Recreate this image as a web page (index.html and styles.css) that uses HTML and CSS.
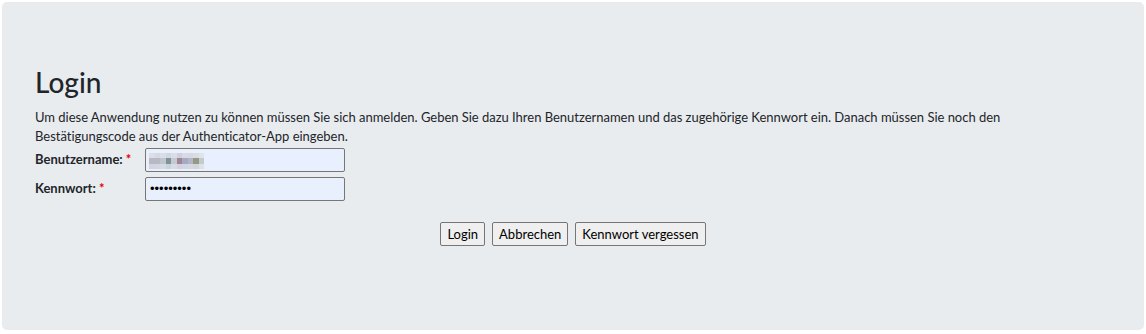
FILE: index.html
```html
<!DOCTYPE html>
<html lang="de">
<head>
  <meta charset="UTF-8" />
  <meta name="viewport" content="width=device-width, initial-scale=1.0"/>
  <title>Login</title>
  <link rel="stylesheet" href="styles.css">
</head>
<body>
  <div class="jumbotron">
    <h3 class="title">Login</h3>
    <p class="intro">Um diese Anwendung nutzen zu können müssen Sie sich anmelden. Geben Sie dazu Ihren Benutzernamen und das zugehörige Kennwort ein. Danach müssen Sie noch den Bestätigungscode aus der Authenticator-App eingeben.</p>

    <form class="login-form" onsubmit="return false">
      <div class="form-row">
        <label for="user" class="form-label">Benutzername: <span class="req">*</span></label>
        <div class="field">
          <input type="text" id="user" class="form-input" value="" />
          <!-- username is blurred in the screenshot -->
          <div class="blur">
            <span style="background:#dcdee6"></span><span style="background:#d6d9e2"></span><span style="background:#d9dde4"></span><span style="background:#d3d6e0"></span><span style="background:#dadde5"></span><span style="background:#d0cfdc"></span><span style="background:#d8dbe4"></span><span style="background:#d6d9e2"></span><span style="background:#d9dce3"></span><span style="background:#e0e3ea"></span>
            <span style="background:#b7b9c6"></span><span style="background:#b5bac4"></span><span style="background:#c0c4cc"></span><span style="background:#7d929b"></span><span style="background:#c5c9d3"></span><span style="background:#a08595"></span><span style="background:#a4aac4"></span><span style="background:#b3b6c6"></span><span style="background:#939a85"></span><span style="background:#c5cad0"></span>
            <span style="background:#d2d4de"></span><span style="background:#d4d7e0"></span><span style="background:#d6dae2"></span><span style="background:#ccd2da"></span><span style="background:#d8dbe4"></span><span style="background:#d4d0dc"></span><span style="background:#d2d5e2"></span><span style="background:#d5d8e2"></span><span style="background:#d3d6d4"></span><span style="background:#dde0e6"></span>
          </div>
        </div>
      </div>
      <div class="form-row">
        <label for="pass" class="form-label">Kennwort: <span class="req">*</span></label>
        <div class="field">
          <input type="password" id="pass" class="form-input form-pw" value="geheim123" />
        </div>
      </div>

      <div class="actions">
        <button type="submit" class="btn">Login</button>
        <button type="button" class="btn">Abbrechen</button>
        <button type="button" class="btn">Kennwort vergessen</button>
      </div>
    </form>
  </div>
</body>
</html>
```

FILE: styles.css
```css
body {
  margin: 2px;
  background-color: #ffffff;
  font-family: Lato, sans-serif;
  font-size: 13px;
  line-height: 1.5;
  color: #212529;
}

.jumbotron {
  background-color: #e9ecef;
  border-radius: 5px;
  padding: 64px 33px 80px;
  height: 184px;
}

.title {
  font-size: 28px;
  font-weight: 500;
  line-height: 1.2;
  margin: 0 0 8px;
}

.intro {
  margin: 0;
  max-width: 1010px;
  letter-spacing: -0.02px;
}

.login-form {
  margin-top: 1px;
}

.form-row {
  display: flex;
  align-items: center;
  margin-bottom: 5px;
}

.form-label {
  width: 110px;
  font-weight: bold;
  white-space: nowrap;
}

.req {
  color: #e00000;
}

.field {
  position: relative;
}

.form-input {
  box-sizing: border-box;
  width: 200px;
  height: 24px;
  margin: 0;
  padding: 1px 4px;
  border: 1px solid #767676;
  border-radius: 2px;
  background-color: #e8f0fe;
  font-family: Lato, sans-serif;
  font-size: 13px;
  color: #000;
}

.form-pw {
  font-family: 'Liberation Sans', sans-serif;
  font-size: 13px;
}

.blur {
  position: absolute;
  left: 4px;
  top: 5px;
  display: grid;
  grid-template-columns: repeat(10, 5.5px);
  grid-auto-rows: 5.5px;
  pointer-events: none;
}

.actions {
  display: flex;
  justify-content: center;
  gap: 7px;
  margin-top: 21px;
}

.btn {
  height: 24px;
  padding: 1px 6px;
  font-family: Lato, sans-serif;
  font-size: 13px;
  color: #000;
  background-color: #efefef;
  border: 1px solid #767676;
  border-radius: 2px;
  cursor: pointer;
}

.btn:hover {
  background-color: #e5e5e5;
}
```
